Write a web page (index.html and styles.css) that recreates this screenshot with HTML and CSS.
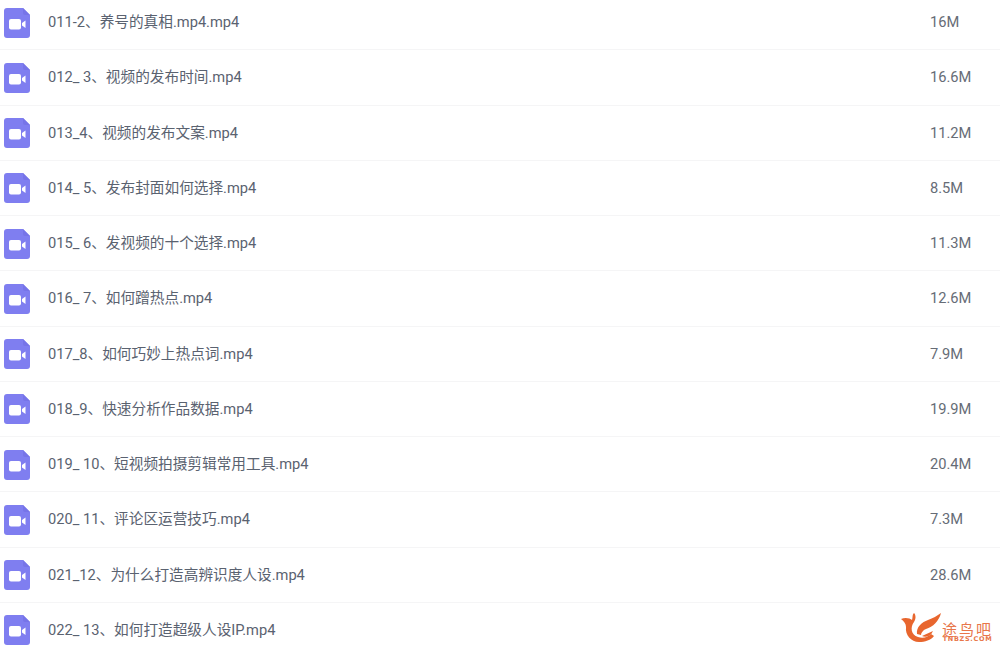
FILE: index.html
```html
<!DOCTYPE html>
<html lang="en">

<head>
  <meta charset="UTF-8">
  <meta name="viewport" content="width=device-width, initial-scale=1.0">
  <title>文件列表</title>
  <link rel="stylesheet" href="styles.css">
</head>

<body>
  <svg class="defs" width="0" height="0">
    <symbol id="video-file" viewBox="0 0 26 30">
      <path fill="#7f7ef0" d="M3 0H19L26 7V27a3 3 0 0 1-3 3H3a3 3 0 0 1-3-3V3a3 3 0 0 1 3-3Z" />
      <path fill="#7674e8" d="M19 0L26 7H21a2 2 0 0 1-2-2Z" />
      <rect fill="#fff" x="5" y="11" width="12" height="10.5" rx="2" />
      <path fill="#fff" d="M18 15L21.5 12.5V20L18 17.5Z" />
    </symbol>
  </svg>
  <ul class="file-list">
    <li class="file-row"><svg class="file-icon"><use href="#video-file" /></svg><span class="file-name">011-2、养号的真相.mp4.mp4</span><span class="file-size">16M</span></li>
    <li class="file-row"><svg class="file-icon"><use href="#video-file" /></svg><span class="file-name">012_ 3、视频的发布时间.mp4</span><span class="file-size">16.6M</span></li>
    <li class="file-row"><svg class="file-icon"><use href="#video-file" /></svg><span class="file-name">013_4、视频的发布文案.mp4</span><span class="file-size">11.2M</span></li>
    <li class="file-row"><svg class="file-icon"><use href="#video-file" /></svg><span class="file-name">014_ 5、发布封面如何选择.mp4</span><span class="file-size">8.5M</span></li>
    <li class="file-row"><svg class="file-icon"><use href="#video-file" /></svg><span class="file-name">015_ 6、发视频的十个选择.mp4</span><span class="file-size">11.3M</span></li>
    <li class="file-row"><svg class="file-icon"><use href="#video-file" /></svg><span class="file-name">016_ 7、如何蹭热点.mp4</span><span class="file-size">12.6M</span></li>
    <li class="file-row"><svg class="file-icon"><use href="#video-file" /></svg><span class="file-name">017_8、如何巧妙上热点词.mp4</span><span class="file-size">7.9M</span></li>
    <li class="file-row"><svg class="file-icon"><use href="#video-file" /></svg><span class="file-name">018_9、快速分析作品数据.mp4</span><span class="file-size">19.9M</span></li>
    <li class="file-row"><svg class="file-icon"><use href="#video-file" /></svg><span class="file-name">019_ 10、短视频拍摄剪辑常用工具.mp4</span><span class="file-size">20.4M</span></li>
    <li class="file-row"><svg class="file-icon"><use href="#video-file" /></svg><span class="file-name">020_ 11、评论区运营技巧.mp4</span><span class="file-size">7.3M</span></li>
    <li class="file-row"><svg class="file-icon"><use href="#video-file" /></svg><span class="file-name">021_12、为什么打造高辨识度人设.mp4</span><span class="file-size">28.6M</span></li>
    <li class="file-row"><svg class="file-icon"><use href="#video-file" /></svg><span class="file-name">022_ 13、如何打造超级人设IP.mp4</span><span class="file-size"></span></li>
  </ul>
  <div class="watermark">
    <svg class="watermark-logo" viewBox="0 0 42 31">
      <path fill="#e8662e" d="M1 7C5 5 10 6 12 8C13 5 12 3 14 1C16 3 16 7 14 10C10 15 11 23 18 25C23 27 28 25 31 22L34 24C31 28 25 30 19 30C11 30 5 23 6 15C6 12 4 9 1 7Z" />
      <path fill="#e8662e" d="M41 1C39 9 33 15 26 17C23 18 21 21 21 23L17 22C16 15 22 10 28 8C33 6 37 4 41 1Z" />
      <path fill="#e8662e" d="M22 24L33 19C31 24 26 26 22 24Z" />
    </svg>
    <div class="watermark-text">
      <span class="watermark-cn">途鸟吧</span>
      <span class="watermark-en">TNBZS.COM</span>
    </div>
  </div>
</body>

</html>
```

FILE: styles.css
```css
* {
  margin: 0;
  padding: 0;
  box-sizing: border-box;
}

html, body {
  height: 648px;
  overflow: hidden;
}

body {
  background-color: #fff;
  font-family: Roboto, "Noto Sans CJK SC", sans-serif;
  font-size: 14.67px;
  line-height: 20px;
  color: #5a6270;
}

.defs {
  display: block;
}

.file-list {
  list-style: none;
  margin-top: -5px;
}

.file-row {
  display: flex;
  align-items: center;
  height: 55.25px;
  padding-left: 4px;
  border-bottom: 1px solid #f5f5f6;
}

.file-icon {
  width: 26px;
  height: 30px;
  margin-top: 1px;
  flex-shrink: 0;
}

.file-name {
  margin-left: 18px;
  width: 882px;
  flex-shrink: 0;
}

.file-size {
  color: #666c76;
}

.watermark {
  position: absolute;
  left: 900px;
  top: 612px;
  display: flex;
}

.watermark-logo {
  width: 42px;
  height: 31px;
}

.watermark-text {
  display: flex;
  flex-direction: column;
  align-items: center;
  padding-top: 10px;
  color: #e8764a;
}

.watermark-cn {
  font-family: "Noto Sans CJK SC", sans-serif;
  font-size: 15px;
  line-height: 14px;
  letter-spacing: 2px;
}

.watermark-en {
  font-family: "DejaVu Sans", sans-serif;
  font-size: 6.5px;
  line-height: 7px;
  font-weight: 700;
  letter-spacing: 0.7px;
}
```
